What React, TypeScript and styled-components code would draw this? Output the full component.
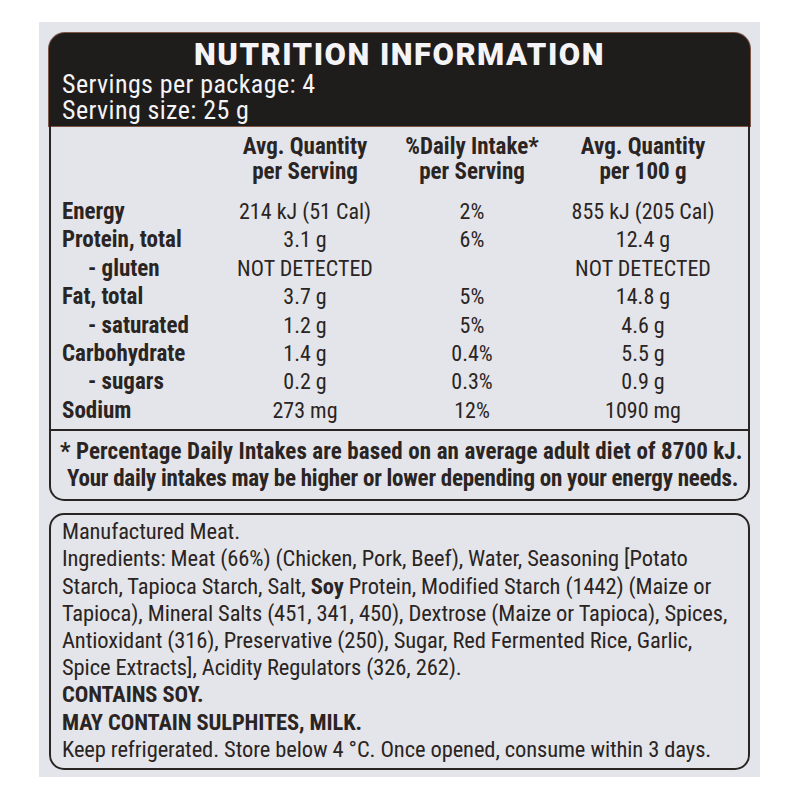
import React from "react";
import styled, { createGlobalStyle } from "styled-components";

const GlobalStyle = createGlobalStyle`
  html, body { margin: 0; padding: 0; background: #ffffff; }
  body { font-family: "Roboto Condensed", "Liberation Sans", Arial, sans-serif; color: #2a2422; }
`;

const Page = styled.div`
  width: 800px;
  height: 800px;
  box-sizing: border-box;
  padding: 22px 40px 0 39px;
`;

const Panel = styled.div`
  width: 721px;
  height: 755px;
  box-sizing: border-box;
  background: #e3e5ea;
  padding: 11px 10px 7px 10px;
  display: flex;
  flex-direction: column;
`;

const Header = styled.div`
  background: #1f1c1c;
  border-radius: 16px 16px 0 0;
  box-shadow: 0 0 0 1px #7d5646;
  height: 95px;
  box-sizing: border-box;
  padding: 6px 13px 0 13px;
  color: #f4f4f6;
`;

const Title = styled.div`
  font-family: Roboto, "Liberation Sans", Arial, sans-serif;
  font-weight: 900;
  font-size: 31px;
  line-height: 32px;
  letter-spacing: 1.5px;
  text-align: center;
`;

const ServingLine = styled.div`
  font-size: 26px;
  line-height: 26px;
  letter-spacing: 0.4px;
`;

const TableBox = styled.div`
  border-left: 2px solid #2a2422;
  border-right: 2px solid #2a2422;
  border-bottom: 2px solid #2a2422;
  padding: 8px 0 4px 11px;
`;

const Grid = styled.div`
  display: grid;
  grid-template-columns: 170px 146px 188px 154px;
`;

const HeadCell = styled.div`
  font-weight: 700;
  font-size: 23px;
  line-height: 25px;
  text-align: center;
  margin-bottom: 14px;
  white-space: nowrap;
`;

const Label = styled.div<{ $indent?: boolean }>`
  font-weight: 700;
  font-size: 23px;
  line-height: 28.4px;
  padding-left: ${(p) => (p.$indent ? "26px" : "0")};
  white-space: nowrap;
`;

const Value = styled.div`
  font-size: 22px;
  line-height: 28.4px;
  text-align: center;
  white-space: nowrap;
`;

const Footnote = styled.div`
  border-left: 2px solid #2a2422;
  border-right: 2px solid #2a2422;
  border-bottom: 2px solid #2a2422;
  border-radius: 0 0 15px 15px;
  padding: 7px 8px 7px 9px;
  font-weight: 700;
  font-size: 23px;
  line-height: 27px;
  white-space: nowrap;
`;

const FootLine = styled.div<{ $indent?: boolean }>`
  padding-left: ${(p) => (p.$indent ? "7px" : "0")};
  letter-spacing: ${(p) => (p.$indent ? "-0.25px" : "0.1px")};
`;

const IngredientsBox = styled.div`
  flex: 1;
  margin-top: 12px;
  border: 2px solid #2a2422;
  border-radius: 15px;
  padding: 3px 8px 5px 11px;
  font-size: 22.5px;
  line-height: 27.2px;
  letter-spacing: -0.1px;
  white-space: nowrap;
`;

const Line = styled.div<{ $bold?: boolean }>`
  font-weight: ${(p) => (p.$bold ? 700 : 400)};
`;

const rows: { label: string; indent?: boolean; a: string; b: string; c: string }[] = [
  { label: "Energy", a: "214 kJ (51 Cal)", b: "2%", c: "855 kJ (205 Cal)" },
  { label: "Protein, total", a: "3.1 g", b: "6%", c: "12.4 g" },
  { label: "- gluten", indent: true, a: "NOT DETECTED", b: "", c: "NOT DETECTED" },
  { label: "Fat, total", a: "3.7 g", b: "5%", c: "14.8 g" },
  { label: "- saturated", indent: true, a: "1.2 g", b: "5%", c: "4.6 g" },
  { label: "Carbohydrate", a: "1.4 g", b: "0.4%", c: "5.5 g" },
  { label: "- sugars", indent: true, a: "0.2 g", b: "0.3%", c: "0.9 g" },
  { label: "Sodium", a: "273 mg", b: "12%", c: "1090 mg" },
];

export default function App() {
  return (
    <>
      <GlobalStyle />
      <Page>
        <Panel>
          <Header>
            <Title>NUTRITION INFORMATION</Title>
            <ServingLine>Servings per package: 4</ServingLine>
            <ServingLine>Serving size: 25 g</ServingLine>
          </Header>
          <TableBox>
            <Grid>
              <HeadCell />
              <HeadCell>
                Avg. Quantity
                <br />
                per Serving
              </HeadCell>
              <HeadCell>
                %Daily Intake*
                <br />
                per Serving
              </HeadCell>
              <HeadCell>
                Avg. Quantity
                <br />
                per 100 g
              </HeadCell>
              {rows.map((r) => (
                <React.Fragment key={r.label}>
                  <Label $indent={r.indent}>{r.label}</Label>
                  <Value>{r.a}</Value>
                  <Value>{r.b}</Value>
                  <Value>{r.c}</Value>
                </React.Fragment>
              ))}
            </Grid>
          </TableBox>
          <Footnote>
            <FootLine>* Percentage Daily Intakes are based on an average adult diet of 8700 kJ.</FootLine>
            <FootLine $indent>Your daily intakes may be higher or lower depending on your energy needs.</FootLine>
          </Footnote>
          <IngredientsBox>
            <Line>Manufactured Meat.</Line>
            <Line>Ingredients: Meat (66%) (Chicken, Pork, Beef), Water, Seasoning [Potato</Line>
            <Line>
              Starch, Tapioca Starch, Salt, <b>Soy</b> Protein, Modified Starch (1442) (Maize or
            </Line>
            <Line>Tapioca), Mineral Salts (451, 341, 450), Dextrose (Maize or Tapioca), Spices,</Line>
            <Line>Antioxidant (316), Preservative (250), Sugar, Red Fermented Rice, Garlic,</Line>
            <Line>Spice Extracts], Acidity Regulators (326, 262).</Line>
            <Line $bold>CONTAINS SOY.</Line>
            <Line $bold>MAY CONTAIN SULPHITES, MILK.</Line>
            <Line>Keep refrigerated. Store below 4 °C. Once opened, consume within 3 days.</Line>
          </IngredientsBox>
        </Panel>
      </Page>
    </>
  );
}
